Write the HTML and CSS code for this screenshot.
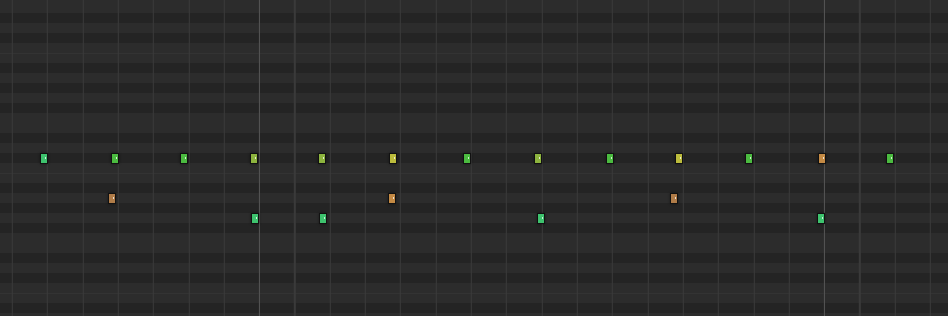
FILE: index.html
```html
<!DOCTYPE html>
<html lang="en">
  <head>
    <meta charset="UTF-8" />
    <meta name="viewport" content="width=device-width, initial-scale=1.0" />
    <title>Piano Roll</title>
    <link rel="stylesheet" href="styles.css">
  </head>
  <body>
    <div class="roll">
      <div class="keys">
        <div class="row white" data-key="F"></div>
        <div class="row white" data-key="E"></div>
        <div class="row black" data-key="D#"></div>
        <div class="row white" data-key="D"></div>
        <div class="row black" data-key="C#"></div>
        <div class="row white" data-key="C"></div>
        <div class="row white octave" data-key="B"></div>
        <div class="row black" data-key="A#"></div>
        <div class="row white" data-key="A"></div>
        <div class="row black" data-key="G#"></div>
        <div class="row white" data-key="G"></div>
        <div class="row black" data-key="F#"></div>
        <div class="row white" data-key="F"></div>
        <div class="row white" data-key="E"></div>
        <div class="row black" data-key="D#"></div>
        <div class="row white" data-key="D"></div>
        <div class="row black" data-key="C#"></div>
        <div class="row white" data-key="C"></div>
        <div class="row white octave" data-key="B"></div>
        <div class="row black" data-key="A#"></div>
        <div class="row white" data-key="A"></div>
        <div class="row black" data-key="G#"></div>
        <div class="row white" data-key="G"></div>
        <div class="row black" data-key="F#"></div>
        <div class="row white" data-key="F"></div>
        <div class="row white" data-key="E"></div>
        <div class="row black" data-key="D#"></div>
        <div class="row white" data-key="D"></div>
        <div class="row black" data-key="C#"></div>
        <div class="row white" data-key="C"></div>
        <div class="row white octave" data-key="B"></div>
        <div class="row black" data-key="A#"></div>
        <div class="row white" data-key="A"></div>
      </div>

      <!-- notes: left = time, top = pitch row -->
      <div class="note teal" style="left: 40px; top: 153px"></div>
      <div class="note green" style="left: 111px; top: 153px"></div>
      <div class="note green" style="left: 180px; top: 153px"></div>
      <div class="note lime" style="left: 250px; top: 153px"></div>
      <div class="note lime" style="left: 318px; top: 153px"></div>
      <div class="note yellow" style="left: 389px; top: 153px"></div>
      <div class="note green" style="left: 463px; top: 153px"></div>
      <div class="note lime" style="left: 534px; top: 153px"></div>
      <div class="note green" style="left: 606px; top: 153px"></div>
      <div class="note yellow" style="left: 675px; top: 153px"></div>
      <div class="note green" style="left: 745px; top: 153px"></div>
      <div class="note orange" style="left: 818px; top: 153px"></div>
      <div class="note green" style="left: 886px; top: 153px"></div>

      <div class="note tan" style="left: 108px; top: 193px"></div>
      <div class="note orange" style="left: 388px; top: 193px"></div>
      <div class="note tan" style="left: 670px; top: 193px"></div>

      <div class="note teal" style="left: 251px; top: 213px"></div>
      <div class="note teal" style="left: 319px; top: 213px"></div>
      <div class="note teal" style="left: 537px; top: 213px"></div>
      <div class="note teal" style="left: 817px; top: 213px"></div>
    </div>
  </body>
</html>
```

FILE: styles.css
```css
body {
  margin: 0;
  padding: 0;
  background-color: #282828;
}
.roll {
  position: relative;
  width: 948px;
  height: 316px;
  overflow: hidden;
}
.roll::after {
  content: "";
  position: absolute;
  inset: 0;
  z-index: 1;
  pointer-events: none;
  background-image:
    repeating-linear-gradient(to right, #525252 0 1px, transparent 1px 565px),
    repeating-linear-gradient(to right, #3a3a3a 0 1px, transparent 1px 35.3125px);
  background-position: 259px 0, 11.8px 0;
}
.keys {
  display: flex;
  flex-direction: column;
  margin-top: -7px;
}
.row {
  height: 10px;
  box-sizing: border-box;
}
.row.white {
  background-color: #2c2c2c;
}
.row.black {
  background-color: #242424;
}
.row.octave {
  border-top: 1px solid #333;
}
.note {
  position: absolute;
  z-index: 2;
  width: 8px;
  height: 11px;
  box-sizing: border-box;
  border: 1px solid #111;
  box-shadow: 0 0 3px rgba(0, 0, 0, 0.45);
}
.note::after {
  content: "";
  position: absolute;
  left: 4px;
  top: 3px;
  width: 1px;
  height: 2px;
  background-color: rgba(255, 255, 255, 0.75);
}
.teal {
  background-color: #3ec36e;
}
.green {
  background-color: #4bbb40;
}
.lime {
  background-color: #8db43e;
}
.yellow {
  background-color: #bcbc3c;
}
.orange {
  background-color: #c48a44;
}
.tan {
  background-color: #b07c48;
}
```
